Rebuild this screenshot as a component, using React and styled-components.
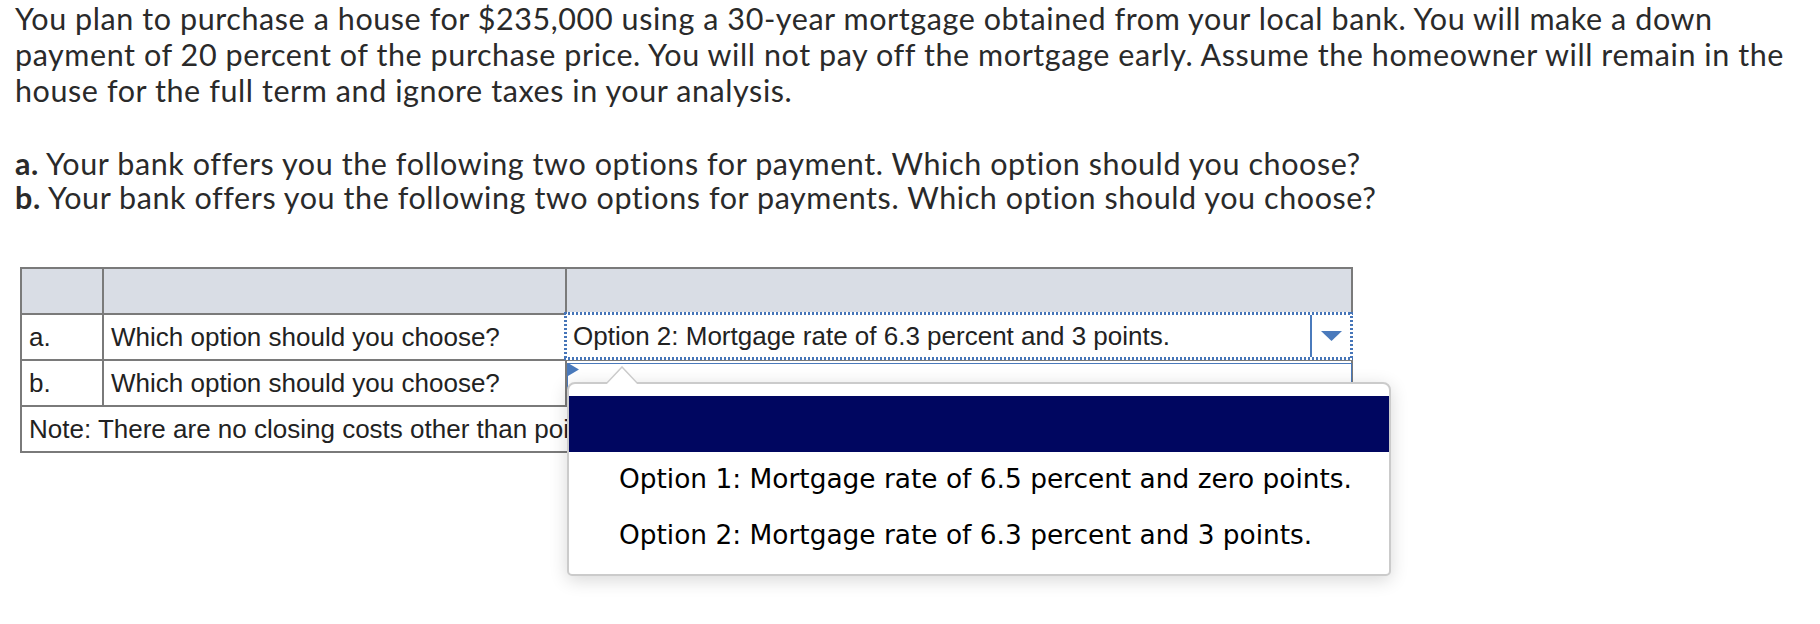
import React from "react";
import styled, { createGlobalStyle } from "styled-components";

const Global = createGlobalStyle`
  html, body { margin: 0; padding: 0; background: #fff; }
  body { width: 1820px; height: 624px; overflow: hidden; }
`;

const Page = styled.div`
  padding: 0 15px;
`;

const Question = styled.div`
  width: 1795px;
  font-family: Lato, "Open Sans", sans-serif;
  font-size: 30.5px;
  letter-spacing: 0.58px;
  line-height: 36px;
  color: #2a2a2a;
`;

const Para = styled.p`
  margin: 0 0 ${(p) => (p.$gap ? "38px" : "0")};
  line-height: ${(p) => (p.$tight ? "34px" : "36px")};
`;

const Label = styled.b`
  font-weight: 700;
`;

const Table = styled.table`
  margin: 53px 0 0 5px;
  width: 1331px;
  table-layout: fixed;
  border-collapse: collapse;
  font-family: "Liberation Sans", Arial, sans-serif;
  font-size: 26px;
  color: #222;
`;

const Row = styled.tr`
  height: 46px;
`;

const HeadCell = styled.th`
  background: #d9dde5;
  border: 2px solid #7a7a7a;
  padding: 0;
`;

const Cell = styled.td`
  border: 2px solid #7a7a7a;
  padding: 0 7px;
  white-space: nowrap;
  overflow: hidden;
  vertical-align: middle;
`;

const SelectCell = styled.td`
  position: relative;
  border: 2px solid #7a7a7a;
  padding: 0;
  vertical-align: middle;
`;

const dots = "#4675b8";

const SelectBox = styled.div`
  display: flex;
  align-items: stretch;
  box-sizing: border-box;
  height: ${(p) => (p.$focused ? "48px" : "42px")};
  margin: ${(p) => (p.$focused ? "-3px -2px -1px -3px" : "2px -1px 0 0")};
  border: ${(p) => (p.$focused ? "3px solid transparent" : "1.5px solid #4a7abc")};
  background: ${(p) =>
    p.$focused
      ? `repeating-linear-gradient(90deg, ${dots} 0 2px, transparent 2px 4px) top left / 100% 3px no-repeat border-box,
         repeating-linear-gradient(90deg, ${dots} 0 2px, transparent 2px 4px) bottom left / 100% 3px no-repeat border-box,
         repeating-linear-gradient(180deg, ${dots} 0 2px, transparent 2px 4px) top left / 3px 100% no-repeat border-box,
         repeating-linear-gradient(180deg, ${dots} 0 2px, transparent 2px 4px) top right / 3px 100% no-repeat border-box,
         #fff`
      : "#fff"};
`;

const SelectText = styled.div`
  flex: 1;
  display: flex;
  align-items: center;
  padding-left: 6px;
  white-space: nowrap;
  overflow: hidden;
`;

const ArrowBox = styled.div`
  width: 38px;
  display: flex;
  align-items: center;
  justify-content: center;
  border-left: 2px solid #4a7abc;
`;

const Marker = styled.svg`
  position: absolute;
  left: 1px;
  top: 2px;
`;

const Popup = styled.div`
  position: absolute;
  z-index: 3;
  left: 0px;
  top: 21px;
  width: 824px;
  box-sizing: border-box;
  border: 2px solid #cbcbcb;
  border-radius: 8px 8px 5px 5px;
  background: #fff;
  box-shadow: 0 4px 18px rgba(0, 0, 0, 0.16);
  padding: 12px 0 10px;
  font-family: "DejaVu Sans", Verdana, sans-serif;
  font-size: 26.4px;
  color: #000;
`;

const Notch = styled.svg`
  position: absolute;
  left: 36px;
  top: -18px;
`;

const Option = styled.div`
  height: 56px;
  box-sizing: border-box;
  padding: 0 0 4px 50px;
  display: flex;
  align-items: center;
  white-space: nowrap;
  background: ${(p) => (p.$active ? "#000660" : "transparent")};
  color: ${(p) => (p.$active ? "#fff" : "#000")};
`;

const opts = [
  "",
  "Option 1: Mortgage rate of 6.5 percent and zero points.",
  "Option 2: Mortgage rate of 6.3 percent and 3 points.",
];

export default function App() {
  return (
    <>
      <Global />
      <Page>
        <Question>
          <Para $gap>
            You plan to purchase a house for $235,000 using a 30-year mortgage
            obtained from your local bank. You will make a down payment of 20
            percent of the purchase price. You will not pay off the mortgage
            early. Assume the homeowner will remain in the house for the full
            term and ignore taxes in your analysis.
          </Para>
          <Para $tight>
            <Label>a.</Label> Your bank offers you the following two options for
            payment. Which option should you choose?
          </Para>
          <Para $tight>
            <Label>b.</Label> Your bank offers you the following two options for
            payments. Which option should you choose?
          </Para>
        </Question>

        <Table>
          <colgroup>
            <col style={{ width: "82px" }} />
            <col style={{ width: "463px" }} />
            <col style={{ width: "786px" }} />
          </colgroup>
          <thead>
            <Row>
              <HeadCell />
              <HeadCell />
              <HeadCell />
            </Row>
          </thead>
          <tbody>
            <Row>
              <Cell>a.</Cell>
              <Cell>Which option should you choose?</Cell>
              <SelectCell>
                <SelectBox $focused>
                  <SelectText>
                    Option 2: Mortgage rate of 6.3 percent and 3 points.
                  </SelectText>
                  <ArrowBox>
                    <svg width="21" height="10" viewBox="0 0 21 10">
                      <polygon points="0,0 21,0 10.5,10" fill="#4a7abc" />
                    </svg>
                  </ArrowBox>
                </SelectBox>
              </SelectCell>
            </Row>
            <Row>
              <Cell>b.</Cell>
              <Cell>Which option should you choose?</Cell>
              <SelectCell>
                <SelectBox>
                  <SelectText />
                </SelectBox>
                <Marker width="11" height="13" viewBox="0 0 11 13">
                  <polygon points="0,0 11,6.5 0,13" fill="#4a7abc" />
                </Marker>
                <Popup>
                  <Notch width="34" height="20" viewBox="0 0 34 20">
                    <polygon points="0,19 17,1 34,19" fill="#fff" stroke="#cbcbcb" strokeWidth="1.5" />
                    <rect x="0" y="18" width="34" height="3" fill="#fff" />
                  </Notch>
                  {opts.map((o, i) => (
                    <Option key={i} $active={i === 0}>
                      {o}
                    </Option>
                  ))}
                </Popup>
              </SelectCell>
            </Row>
            <Row>
              <Cell colSpan={3}>
                Note: There are no closing costs other than points.
              </Cell>
            </Row>
          </tbody>
        </Table>
      </Page>
    </>
  );
}
